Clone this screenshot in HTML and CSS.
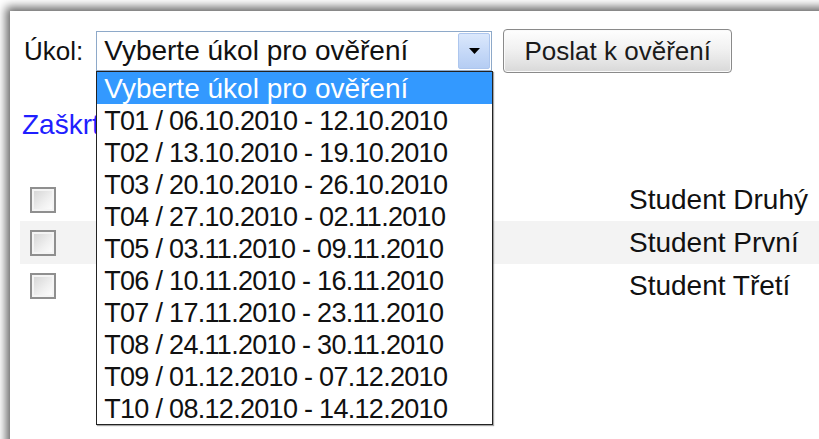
FILE: index.html
```html
<!DOCTYPE html>
<html lang="cs">
<head>
<meta charset="utf-8">
<title>Ověření úkolů</title>
<link rel="stylesheet" href="styles.css">
</head>
<body>
<div class="sheet">
  <form class="task-form">
    <label class="task-label" for="task">Úkol:</label>
    <div class="combo" id="task">
      <div class="combo-field">
        <span class="combo-value">Vyberte úkol pro ověření</span>
        <span class="combo-arrow">
          <svg width="11" height="6" viewBox="0 0 11 6"><path d="M0 0H11L5.5 6Z" fill="#000"/></svg>
        </span>
      </div>
      <ul class="combo-list">
        <li class="combo-option is-active">Vyberte úkol pro ověření</li>
        <li class="combo-option">T01 / 06.10.2010 - 12.10.2010</li>
        <li class="combo-option">T02 / 13.10.2010 - 19.10.2010</li>
        <li class="combo-option">T03 / 20.10.2010 - 26.10.2010</li>
        <li class="combo-option">T04 / 27.10.2010 - 02.11.2010</li>
        <li class="combo-option">T05 / 03.11.2010 - 09.11.2010</li>
        <li class="combo-option">T06 / 10.11.2010 - 16.11.2010</li>
        <li class="combo-option">T07 / 17.11.2010 - 23.11.2010</li>
        <li class="combo-option">T08 / 24.11.2010 - 30.11.2010</li>
        <li class="combo-option">T09 / 01.12.2010 - 07.12.2010</li>
        <li class="combo-option">T10 / 08.12.2010 - 14.12.2010</li>
      </ul>
    </div>
    <button type="button" class="send-btn">Poslat k ověření</button>
  </form>

  <a class="check-all" href="#">Zaškrtnout vše</a>

  <div class="students">
    <div class="student-row">
      <span class="cell-check"><span class="checkbox"></span></span>
      <span class="cell-name">Student Druhý</span>
    </div>
    <div class="student-row is-alt">
      <span class="cell-check"><span class="checkbox"></span></span>
      <span class="cell-name">Student První</span>
    </div>
    <div class="student-row">
      <span class="cell-check"><span class="checkbox"></span></span>
      <span class="cell-name">Student Třetí</span>
    </div>
  </div>
</div>
</body>
</html>
```

FILE: styles.css
```css
html, body {
  margin: 0;
  padding: 0;
  overflow: hidden;
  background: #ffffff;
}

body {
  font-family: "Liberation Sans", Arial, sans-serif;
  color: #000;
}

/* white page with a soft shadow along its top and left edges */
.sheet {
  margin: 11px 0 0 10px;
  width: 816px;
  min-height: 520px;
  background: #fff;
  box-shadow: 0 0 9px 4px rgba(0, 0, 0, 0.6);
  padding: 18px 0 0 10px;
  box-sizing: border-box;
}

/* task selector row */
.task-form {
  display: flex;
  align-items: center;
  padding-left: 4px;
  height: 44px;
}

.task-label {
  font-size: 26px;
  margin-right: 13px;
  color: #111;
}

.combo {
  position: relative;
  width: 396px;
}

.combo-field {
  display: flex;
  align-items: center;
  height: 40px;
  box-sizing: border-box;
  border: 1px solid #8ea9c9;
  background: #fff;
  padding: 1px 1px 1px 7px;
}

.combo-value {
  flex: 1;
  font-size: 28px;
  line-height: 36px;
  white-space: nowrap;
  color: #111;
}

.combo-arrow {
  width: 32px;
  align-self: stretch;
  box-sizing: border-box;
  border: 1px solid #adc6ee;
  border-radius: 2px;
  background: linear-gradient(#dbe8fc, #c3d7f7 60%, #b5cdf3);
  display: flex;
  align-items: center;
  justify-content: center;
}

/* open option list laid over the content below */
.combo-list {
  position: absolute;
  left: 0;
  top: 40px;
  width: 397px;
  box-sizing: border-box;
  margin: 0;
  padding: 0;
  list-style: none;
  background: #fff;
  border: 1px solid #222;
  box-shadow: 1px 1px 1px rgba(0, 0, 0, 0.35);
  z-index: 2;
}

.combo-option {
  height: 32px;
  line-height: 34px;
  padding-left: 7px;
  font-size: 27px;
  letter-spacing: -0.7px;
  white-space: nowrap;
  color: #111;
}

.combo-option.is-active {
  background: #3399ff;
  color: #fff;
  letter-spacing: 0;
  font-size: 28px;
}

.send-btn {
  margin-left: 11px;
  width: 229px;
  height: 44px;
  font-family: inherit;
  font-size: 26px;
  color: #1a1a1a;
  border: 1px solid #8a8a8a;
  border-radius: 4px;
  background: linear-gradient(#fefefe, #f1f1f1 45%, #e2e2e2 80%, #d8d8d8);
  box-shadow: inset 0 0 0 1px #fafafa;
  padding: 0;
}

.check-all {
  display: block;
  margin: 36px 0 0 2px;
  font-size: 28px;
  line-height: 32px;
  color: #1f1fff;
  text-decoration: none;
  white-space: nowrap;
}

/* student list */
.students {
  margin-top: 37px;
}

.student-row {
  display: grid;
  grid-template-columns: 609px 1fr;
  align-items: center;
  height: 43px;
}

.student-row.is-alt {
  background: #f3f3f3;
}

.cell-check {
  padding-left: 10px;
  display: flex;
  align-items: center;
}

.checkbox {
  width: 26px;
  height: 26px;
  box-sizing: border-box;
  border: 2px solid #8f8f8f;
  background: linear-gradient(135deg, #d2d2d2, #f0f0f0 60%, #ffffff);
  box-shadow: inset 0 0 0 2px #f4f4f4;
}

.cell-name {
  font-size: 28px;
  line-height: 32px;
  white-space: nowrap;
  color: #111;
}
```
